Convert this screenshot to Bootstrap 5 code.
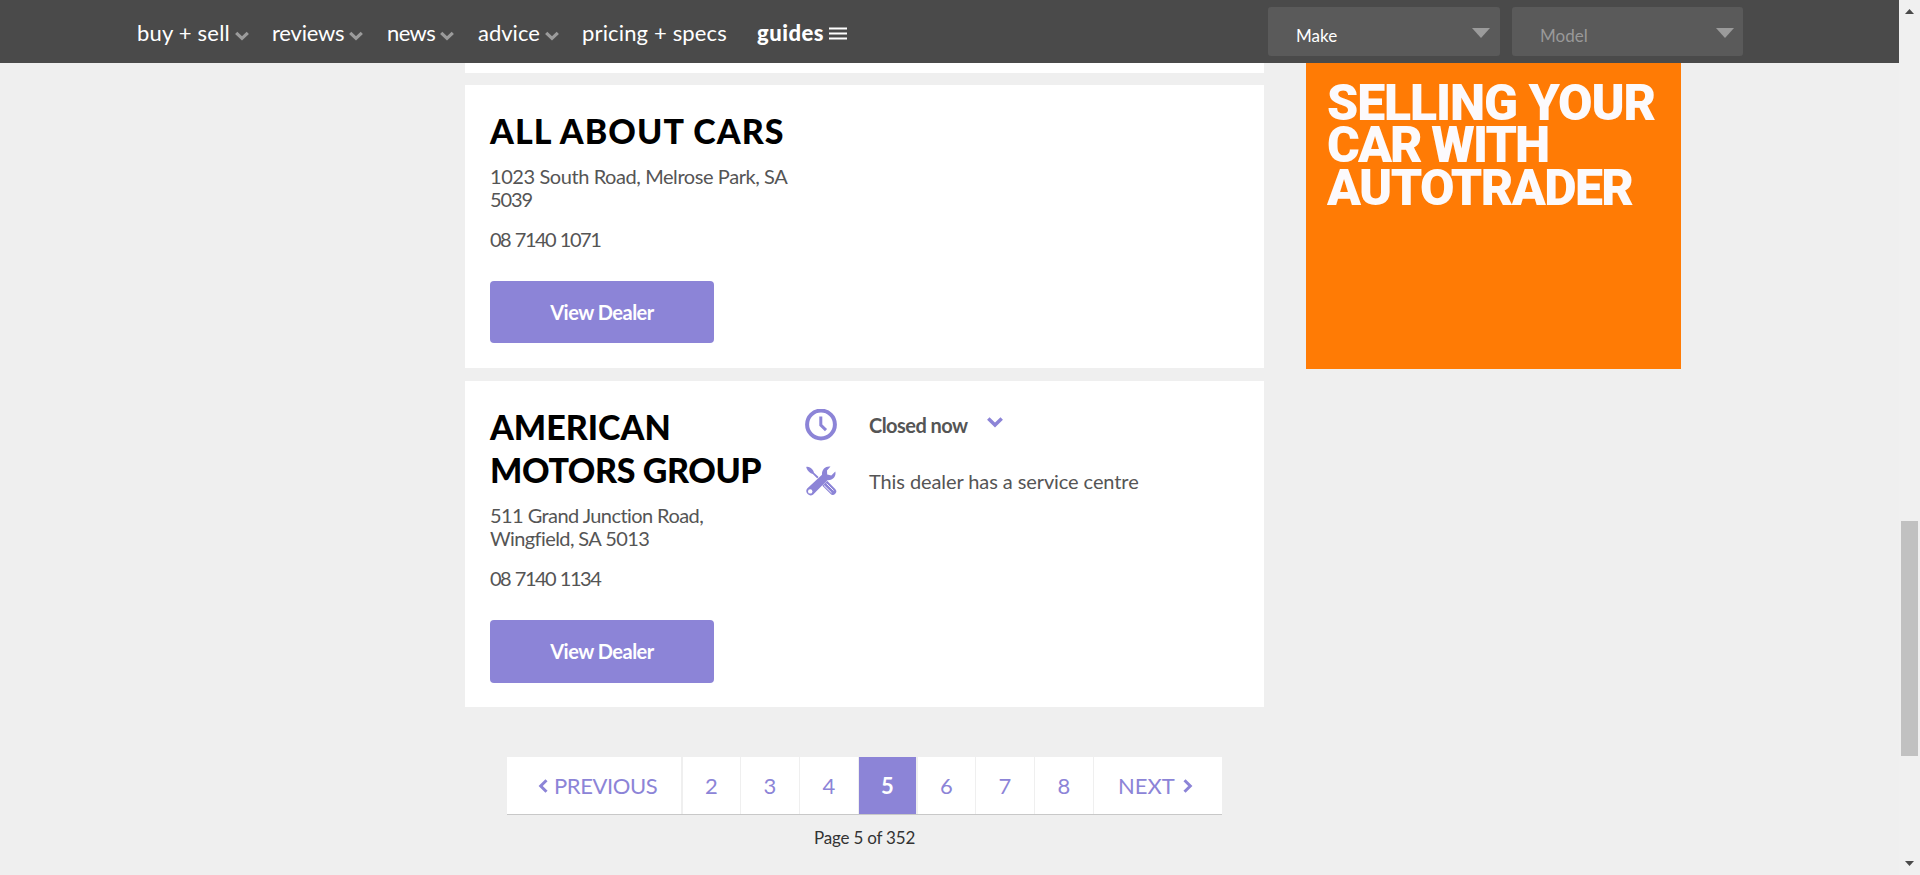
<!DOCTYPE html>
<html lang="en">
<head>
<meta charset="utf-8">
<meta name="viewport" content="width=device-width, initial-scale=1">
<title>Dealers - Autotrader</title>
<link href="https://cdn.jsdelivr.net/npm/bootstrap@5.3.0/dist/css/bootstrap.min.css" rel="stylesheet">
<style>
:root{--violet:#8c84d7;--grey-text:#555}
html,body{height:100%;overflow:hidden}
body{background:#efefef;font-family:Lato,"Open Sans",sans-serif;font-size:20px;line-height:22.5px;color:var(--grey-text);font-variant-ligatures:none}
svg{display:block;flex:none}
.page-area{width:1899px;height:875px}
/* top bar */
.topbar{height:63px;background:#4a4a4a;padding:0 156px 0 137px}
.menu-entry{height:65px;color:#fff;text-decoration:none;line-height:30px;font-size:22px;white-space:nowrap}
.menu-entry svg{margin-top:6px}
.e-buy{width:135px;letter-spacing:.2px}
.e-reviews{width:115px;letter-spacing:-.2px}
.e-news{width:91px;letter-spacing:-.6px}
.e-advice{width:104px}
.e-pricing{width:175px;letter-spacing:.15px}
.e-guides{font-weight:900;letter-spacing:.5px}
.menu-entry.e-guides svg{margin:2px 0 0 5px}
.picker{width:232px;height:49px;margin-top:7px;background:#5a5a5a;border-radius:3px;font-size:17px;color:#fff;padding:6px 10px 0 28px;line-height:45px}
.picker.is-off{width:231px;padding-right:9px;color:#999}
.tri{width:0;height:0;border:9px solid transparent;border-top:10px solid #9b9b9b;border-bottom:0;margin-top:15px}
/* dealer cards */
.results{margin-left:465px;width:799px}
.dealer{background:#fff;padding:24px 25px 25px;height:283px;margin-top:12px}
.dealer.tall{height:326px;margin-top:13px}
.dealer.stub{height:10px;padding:0;margin:0}
.dealer h2{font-size:34px;line-height:43px;font-weight:900;color:#000;margin:0 0 13px;white-space:nowrap}
.dealer p{margin:0 0 18px;white-space:nowrap}
.info{width:315px}
.phone{letter-spacing:-1.5px;word-spacing:1px}
.view-btn{display:block;width:224px;height:62px;margin-top:30.5px;border:0;border-radius:4px;background:var(--violet);color:#fff;font-weight:700;font-size:20px;letter-spacing:-.5px;padding:0}
.tall .view-btn{height:63px;margin-top:30px}
.ls-title{letter-spacing:1.1px}
.ls-group{letter-spacing:-.4px}
.ls-addr{letter-spacing:-.42px}
.ls-junction{letter-spacing:-.57px}
.ls-wing{letter-spacing:-.6px}
.ls-post{letter-spacing:-1.1px}
.fact-row{height:56px}
.fact-icon{width:64px}
.fact-text{padding-top:9px;letter-spacing:-.09px}
.closed{font-weight:700;letter-spacing:-.55px;width:118px}
.tools{margin-top:5px}
/* promo */
.promo{width:375px;height:306px;margin-left:42px;background:#ff7b05;color:#fcfafc;font:900 50px/42.5px Roboto,sans-serif;padding:18.5px 0 0 21px;white-space:nowrap}
.promo div:nth-child(1){letter-spacing:-1.1px}
.promo div:nth-child(2){letter-spacing:-1.9px}
.promo div:nth-child(3){letter-spacing:-1.6px}
/* pager */
.pager{margin:50px 0 0 42px;width:715px;height:58px;background:#fff;border-bottom:1px solid #c8c8c8}
.pager a{color:var(--violet);text-decoration:none;font-size:22px;line-height:58px;width:59px;border-right:1px solid #efefef;text-align:center;background-clip:padding-box}
.pager a.slim{width:58px}
.pager a.prev{width:176px;border-right-width:2px;padding:0 0 0 31px;gap:6px;letter-spacing:-.4px}
.pager a.next{width:128px;border:0;padding:0 0 0 24px;gap:8px}
.pager a.active{background-color:var(--violet);color:#fff;font-weight:700;border-right-width:2px}
.count{font-size:17px;line-height:24px;letter-spacing:-.2px;color:#333;margin:11px 0 0 349px}
/* scroll track */
.scroller{width:21px;height:875px;background:#f0f0f0;padding:9px 2px}
.thumb{width:17px;height:235px;margin-top:507px;background:#c1c1c1}
</style>
</head>
<body>
<div class="d-flex">
<div class="page-area">
 <nav class="topbar d-flex">
  <a href="#" class="menu-entry e-buy d-flex align-items-center">buy + sell<svg class="ms-1" width="16" height="10" viewBox="0 0 16 10"><path d="M2.200 1.800 8 7.400l5.800-5.600" fill="none" stroke="#9b9b9b" stroke-width="3.200"/></svg></a>
  <a href="#" class="menu-entry e-reviews d-flex align-items-center">reviews<svg class="ms-1" width="16" height="10" viewBox="0 0 16 10"><path d="M2.200 1.800 8 7.400l5.800-5.600" fill="none" stroke="#9b9b9b" stroke-width="3.200"/></svg></a>
  <a href="#" class="menu-entry e-news d-flex align-items-center">news<svg class="ms-1" width="16" height="10" viewBox="0 0 16 10"><path d="M2.200 1.800 8 7.400l5.800-5.600" fill="none" stroke="#9b9b9b" stroke-width="3.200"/></svg></a>
  <a href="#" class="menu-entry e-advice d-flex align-items-center">advice<svg class="ms-1" width="16" height="10" viewBox="0 0 16 10"><path d="M2.200 1.800 8 7.400l5.800-5.600" fill="none" stroke="#9b9b9b" stroke-width="3.200"/></svg></a>
  <a href="#" class="menu-entry e-pricing d-flex align-items-center">pricing + specs</a>
  <a href="#" class="menu-entry e-guides d-flex align-items-center">guides<svg width="18" height="13" viewBox="0 0 18 13"><path d="M0 1.500h18M0 6.500h18M0 11.500h18" stroke="#fff" stroke-width="2.200"/></svg></a>
  <div class="d-flex ms-auto" style="gap:12px">
   <div class="picker d-flex justify-content-between">Make<span class="tri"></span></div>
   <div class="picker is-off d-flex justify-content-between">Model<span class="tri"></span></div>
  </div>
 </nav>
 <main class="d-flex align-items-start">
  <div class="results">
   <section class="dealer stub"></section>
   <section class="dealer">
    <h2 class="ls-title">ALL ABOUT CARS</h2>
    <p><span class="ls-addr">1023 South Road, Melrose Park, SA</span><br><span class="ls-post">5039</span></p>
    <p class="phone">08 7140 1071</p>
    <button class="view-btn">View Dealer</button>
   </section>
   <section class="dealer tall d-flex">
    <div class="info">
     <h2>AMERICAN<br><span class="ls-group">MOTORS GROUP</span></h2>
     <p><span class="ls-junction">511 Grand Junction Road,</span><br><span class="ls-wing">Wingfield, SA 5013</span></p>
     <p class="phone">08 7140 1134</p>
     <button class="view-btn">View Dealer</button>
    </div>
    <div>
     <div class="fact-row d-flex">
      <div class="fact-icon"><svg class="mt-1" width="32" height="32" viewBox="0 0 32 32" fill="none" stroke="#8c84d7"><circle cx="16" cy="15.500" r="13.900" stroke-width="4"/><path d="M15.800 7.500v8.700l5.200 5" stroke-width="3"/></svg></div>
      <div class="fact-text closed">Closed now</div>
      <svg class="mt-1 pt-2" width="16" height="20" viewBox="0 0 16 12" overflow="visible"><path d="M1.300 1.500 8 8l6.700-6.500" fill="none" stroke="#8c84d7" stroke-width="3.500"/></svg>
     </div>
     <div class="fact-row d-flex">
      <div class="fact-icon"><svg class="tools" width="32" height="30" viewBox="0 0 32 30">
       <path d="M1.200.9C3.500.3 6.500 2 8.300 4.800L9 6.800l4.600 4.300-1.300 1.300-4.500-4.400-2-.8C3.500 5.500 1.600 3.200 1.200.9z" fill="#8c84d7"/>
       <path d="M20 17.500l7.800 7.800" stroke="#8c84d7" stroke-width="6.800" stroke-linecap="round"/>
       <path d="M19 19.500l7.500 7.300M21.500 17.500l7 7" stroke="#fff" stroke-width=".9"/>
       <path d="M25.500.5C20.500-.3 16.500 3.500 17 8.800L2.200 22.500a4.300 4.300 0 0 0 6 6L22.300 14.300C27.500 14.800 31.500 10.500 30.300 5.600L26.300 9.400 22.200 8.500 22 4.500z" fill="#8c84d7" stroke="#fff" stroke-width=".8" paint-order="stroke"/>
       <circle cx="5.200" cy="25.400" r="2.200" fill="#fff"/></svg></div>
      <div class="fact-text">This dealer has a service centre</div>
     </div>
    </div>
   </section>
   <div class="pager d-flex">
    <a href="#" class="prev d-flex align-items-center"><svg width="10" height="14" viewBox="0 0 10 14"><path d="M8.500 1.200 2.700 7l5.800 5.800" fill="none" stroke="#8c84d7" stroke-width="3"/></svg>PREVIOUS</a>
    <a href="#" class="slim">2</a><a href="#">3</a><a href="#">4</a><a href="#" class="active">5</a><a href="#" class="slim">6</a><a href="#">7</a><a href="#">8</a>
    <a href="#" class="next d-flex align-items-center">NEXT<svg width="10" height="14" viewBox="0 0 10 14"><path d="M1.500 1.200 7.300 7l-5.800 5.800" fill="none" stroke="#8c84d7" stroke-width="3"/></svg></a>
   </div>
   <div class="count">Page 5 of 352</div>
  </div>
  <aside class="promo"><div>SELLING YOUR</div><div>CAR WITH</div><div>AUTOTRADER</div></aside>
 </main>
</div>
<div class="scroller d-flex flex-column align-items-center">
 <svg width="9" height="5" viewBox="0 0 9 5"><path d="M0 5 4.500 0 9 5z" fill="#4a4a4a"/></svg>
 <div class="thumb"></div>
 <svg class="mt-auto" width="9" height="5" viewBox="0 0 9 5"><path d="M0 0h9L4.500 5z" fill="#4a4a4a"/></svg>
</div>
</div>
<script src="https://cdn.jsdelivr.net/npm/bootstrap@5.3.0/dist/js/bootstrap.bundle.min.js"></script>
</body>
</html>
